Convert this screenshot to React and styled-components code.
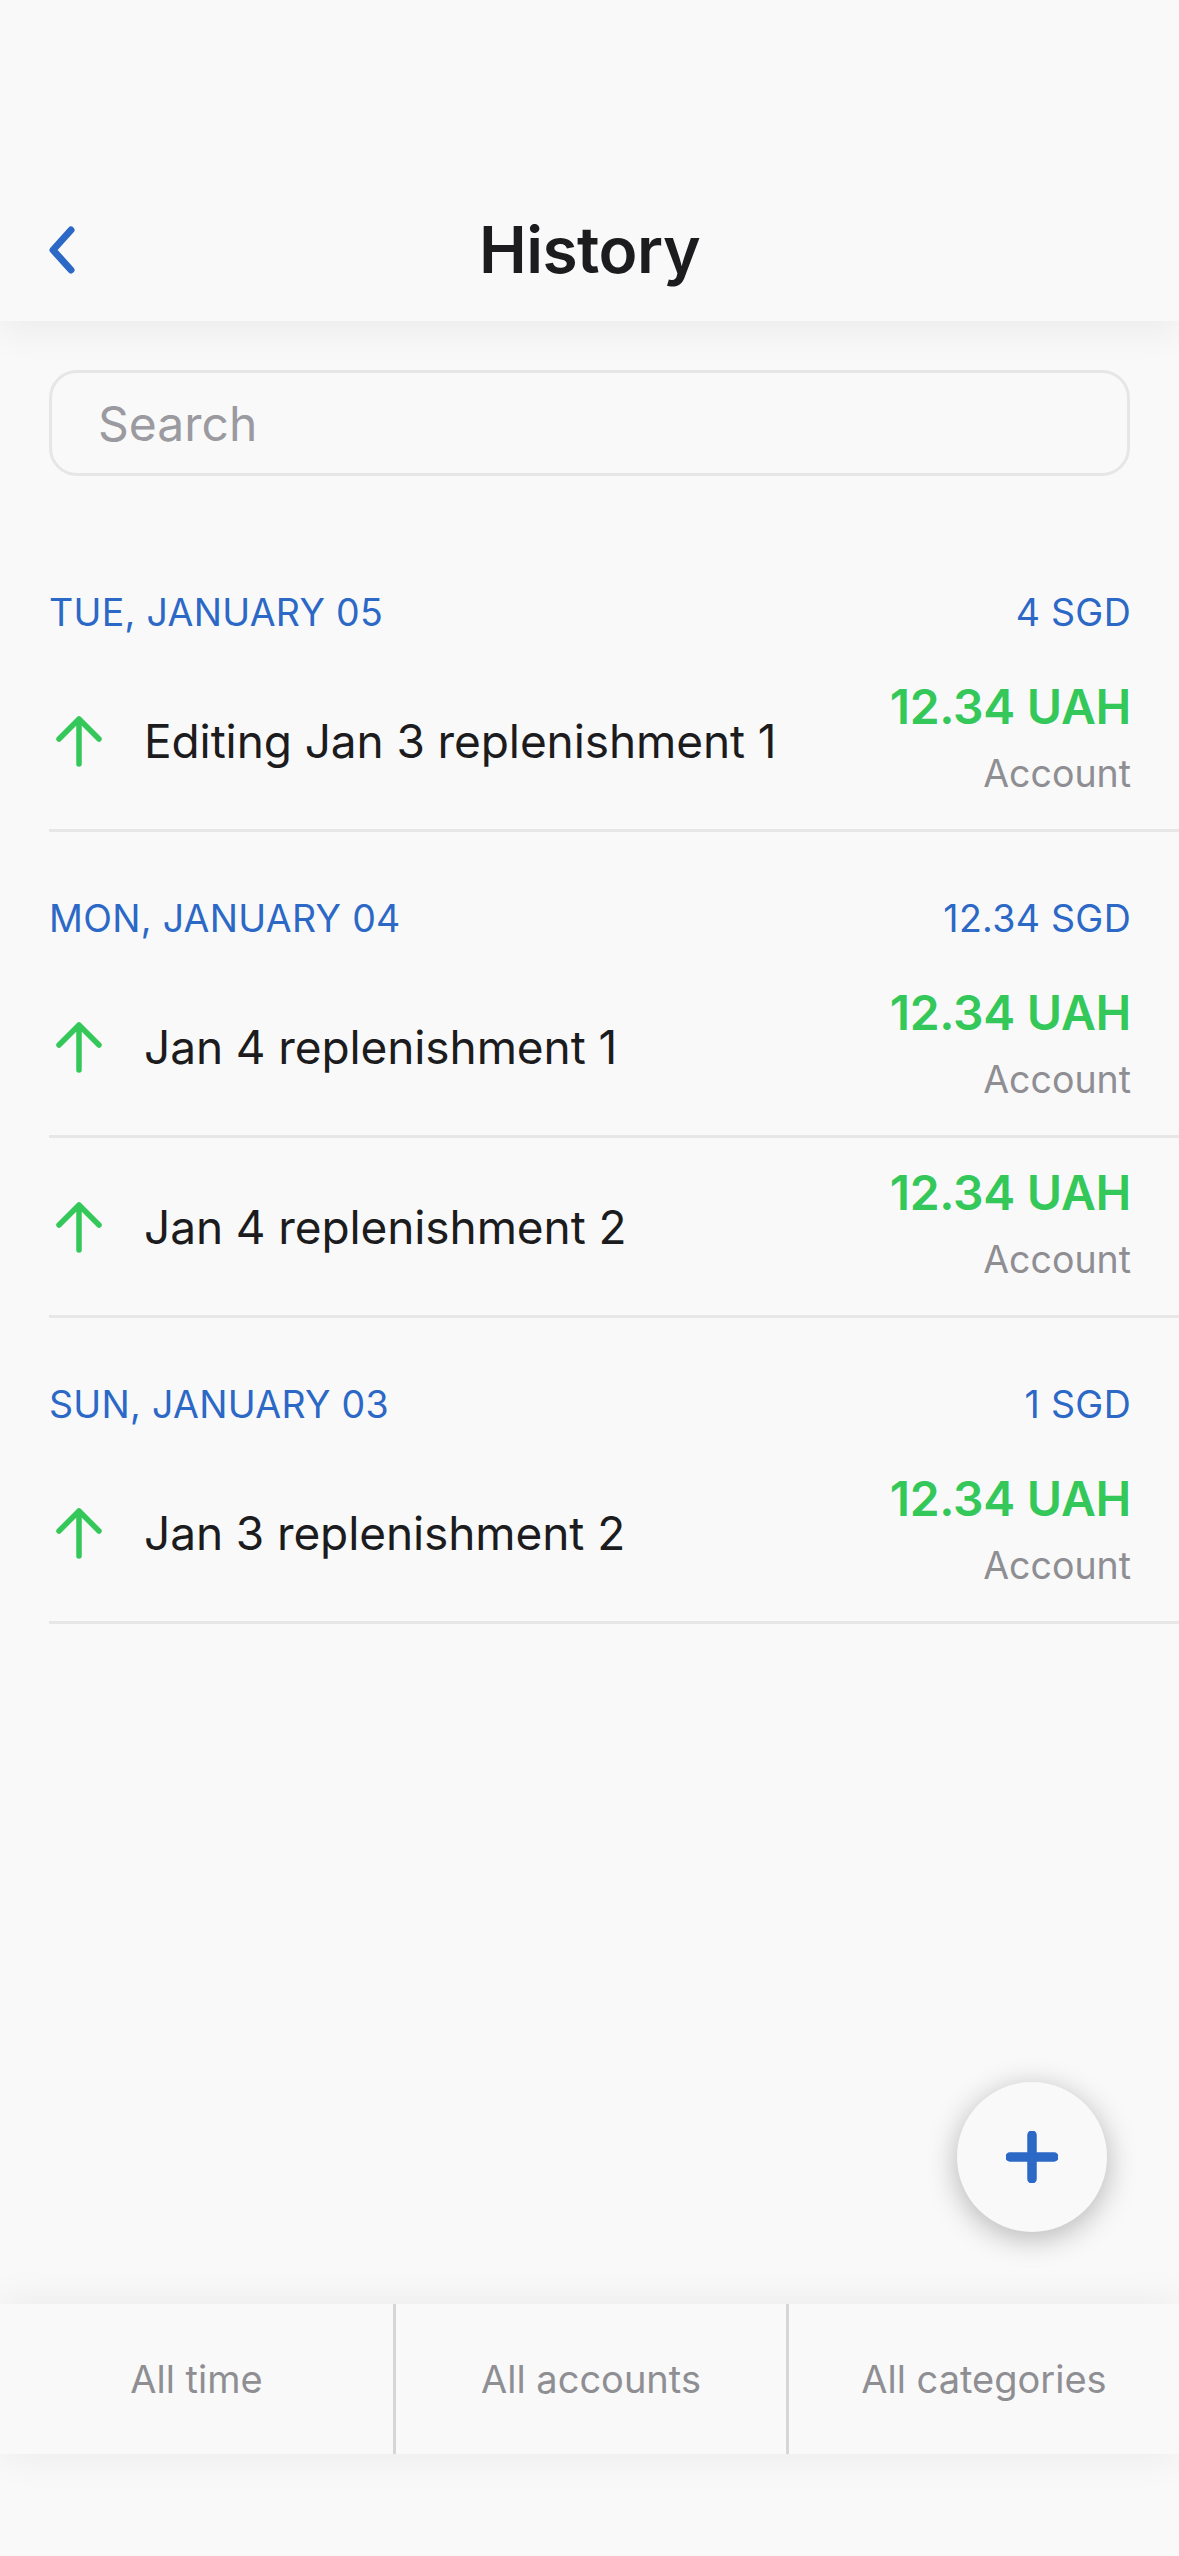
import React from "react";
import styled, { createGlobalStyle } from "styled-components";

const GlobalStyle = createGlobalStyle`
    html, body {
        margin: 0;
        padding: 0;
        background: #f9f9f9;
    }
    * {
        box-sizing: border-box;
    }
`;

const Page = styled.div`
    position: relative;
    width: 1179px;
    min-height: 2556px;
    display: flex;
    flex-direction: column;
    background: #f9f9f9;
    font-family: Inter, "Noto Sans", sans-serif;
    overflow: hidden;
`;

const Header = styled.header`
    position: relative;
    z-index: 2;
    height: 321px;
    padding: 178px 48px 0;
    display: flex;
    align-items: center;
    background: #f9f9f9;
    box-shadow: 0 12px 34px rgba(0, 0, 0, 0.055);
`;

const BackButton = styled.button`
    width: 60px;
    height: 60px;
    padding: 0;
    border: none;
    background: none;
    display: flex;
    align-items: center;
`;

const Title = styled.h1`
    flex: 1;
    margin: 0 60px 0 0;
    text-align: center;
    font-size: 64px;
    font-weight: 600;
    color: #1c1c1e;
    letter-spacing: -0.5px;
`;

const SearchWrap = styled.div`
    padding: 49px 49px 0;
`;

const SearchBox = styled.div`
    height: 106px;
    border: 3px solid #e6e6e6;
    border-radius: 28px;
    padding-left: 46px;
    display: flex;
    align-items: center;
    font-size: 48px;
    color: #9a9aa0;
`;

const List = styled.div`
    flex: 1;
    padding-top: 50px;
`;

const GroupHeader = styled.div`
    height: 126px;
    padding: 68px 48px 20px 49px;
    display: flex;
    justify-content: space-between;
    align-items: center;
    font-size: 37.5px;
    line-height: 38px;
    color: #2c68c6;
    letter-spacing: 0.3px;
`;

const Row = styled.div`
    margin-left: 49px;
    height: 180px;
    padding-right: 48px;
    display: flex;
    border-bottom: 3px solid #e7e7e7;
`;

const RowMain = styled.div`
    flex: 1;
    display: flex;
    align-items: center;
    gap: 40px;
    padding-left: 5px;
`;

const RowTitle = styled.span`
    font-size: 46px;
    color: #1c1c1e;
    letter-spacing: -0.1px;
`;

const RowSide = styled.div`
    display: flex;
    flex-direction: column;
    align-items: flex-end;
    padding-top: 27px;
`;

const Amount = styled.span`
    font-size: 48px;
    line-height: 56px;
    font-weight: 600;
    color: #34c759;
    letter-spacing: -0.3px;
`;

const AccountName = styled.span`
    margin-top: 17px;
    font-size: 37.5px;
    line-height: 44px;
    color: #8e8e93;
`;

const Fab = styled.button`
    position: absolute;
    right: 72px;
    bottom: 324px;
    z-index: 3;
    width: 150px;
    height: 150px;
    border: none;
    border-radius: 50%;
    background: #f9f9f9;
    box-shadow: 0 6px 30px rgba(0, 0, 0, 0.28);
    display: flex;
    align-items: center;
    justify-content: center;
`;

const Footer = styled.footer`
    display: flex;
    flex-direction: column;
`;

const TabBar = styled.nav`
    position: relative;
    z-index: 1;
    height: 150px;
    display: grid;
    grid-template-columns: repeat(3, 1fr);
    background: #f9f9f9;
    box-shadow: 0 0 40px rgba(0, 0, 0, 0.07);
`;

const Tab = styled.div`
    display: flex;
    align-items: center;
    justify-content: center;
    font-size: 38px;
    color: #8e8e93;
    border-left: ${(props) => (props.first ? "none" : "3px solid #d6d6d6")};
`;

const SafeArea = styled.div`
    height: 102px;
`;

function ArrowUp() {
    return (
        <svg width="50" height="54" viewBox="0 0 50 54" fill="none">
            <path
                d="M25 5V50M5 25L25 5L45 25"
                stroke="#34c759"
                strokeWidth="5.5"
                strokeLinecap="round"
                strokeLinejoin="round"
            />
        </svg>
    );
}

const groups = [
    {
        date: "TUE, JANUARY 05",
        total: "4 SGD",
        items: ["Editing Jan 3 replenishment 1"],
    },
    {
        date: "MON, JANUARY 04",
        total: "12.34 SGD",
        items: ["Jan 4 replenishment 1", "Jan 4 replenishment 2"],
    },
    {
        date: "SUN, JANUARY 03",
        total: "1 SGD",
        items: ["Jan 3 replenishment 2"],
    },
];

function App() {
    return (
        <Page>
            <GlobalStyle />
            <Header>
                <BackButton>
                    <svg width="28" height="48" viewBox="0 0 28 48" fill="none">
                        <path
                            d="M23 4L5 24L23 44"
                            stroke="#2c68c6"
                            strokeWidth="7"
                            strokeLinecap="round"
                            strokeLinejoin="round"
                        />
                    </svg>
                </BackButton>
                <Title>History</Title>
            </Header>

            <SearchWrap>
                <SearchBox>Search</SearchBox>
            </SearchWrap>

            <List>
                {groups.map((group) => (
                    <div key={group.date}>
                        <GroupHeader>
                            <span>{group.date}</span>
                            <span>{group.total}</span>
                        </GroupHeader>
                        {group.items.map((item) => (
                            <Row key={item}>
                                <RowMain>
                                    <ArrowUp />
                                    <RowTitle>{item}</RowTitle>
                                </RowMain>
                                <RowSide>
                                    <Amount>12.34 UAH</Amount>
                                    <AccountName>Account</AccountName>
                                </RowSide>
                            </Row>
                        ))}
                    </div>
                ))}
            </List>

            <Fab>
                <svg width="52" height="52" viewBox="0 0 52 52" fill="none">
                    <path
                        d="M26 4V48M4 26H48"
                        stroke="#2c68c6"
                        strokeWidth="9.5"
                        strokeLinecap="round"
                    />
                </svg>
            </Fab>

            <Footer>
                <TabBar>
                    <Tab first>All time</Tab>
                    <Tab>All accounts</Tab>
                    <Tab>All categories</Tab>
                </TabBar>
                <SafeArea />
            </Footer>
        </Page>
    );
}

export default App;
